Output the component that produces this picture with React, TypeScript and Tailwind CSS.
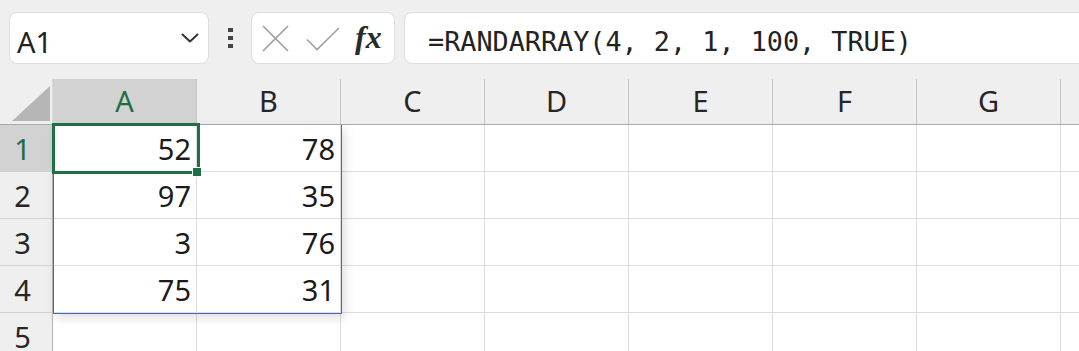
import React from 'react'

const COLS = ['A', 'B', 'C', 'D', 'E', 'F', 'G']
const DATA: Record<number, [number, number]> = {
  1: [52, 78],
  2: [97, 35],
  3: [3, 76],
  4: [75, 31],
}
const sans = { fontFamily: '"Noto Sans", "Noto Sans CJK JP", sans-serif' }

function Chevron() {
  return (
    <svg width="18" height="12" viewBox="0 0 18 12" fill="none">
      <polyline points="1.5,2.5 9,9.5 16.5,2.5" stroke="#333" strokeWidth="2" strokeLinecap="round" strokeLinejoin="round" />
    </svg>
  )
}

function Cross() {
  return (
    <svg width="27" height="27" viewBox="0 0 27 27" fill="none">
      <path d="M1 1 L26 26 M26 1 L1 26" stroke="#9e9e9e" strokeWidth="1.7" />
    </svg>
  )
}

function Check() {
  return (
    <svg width="34" height="24" viewBox="0 0 34 24" fill="none">
      <polyline points="1,12.5 11,22.5 33,1" stroke="#a3a3a3" strokeWidth="1.7" fill="none" />
    </svg>
  )
}

export default function App() {
  return (
    <div className="w-[1079px] h-[351px] overflow-hidden bg-white text-[#262626]" style={sans}>
      {/* Formula toolbar */}
      <div className="h-[79px] bg-[#efefef] flex items-start pt-[12px] pl-[9px]">
        <div className="w-[200px] h-[52px] bg-white border border-[#dedede] rounded-[8px] flex items-center pl-[7px] pr-[9px] pt-[6px]">
          <span className="text-[29px] leading-none flex-1 text-[#222]">A1</span>
          <span className="-mt-[6px]"><Chevron /></span>
        </div>
        <div className="w-[42px] h-[52px] flex flex-col items-center justify-center gap-[4px] pl-[1px]">
          <span className="block w-[5px] h-[4px] bg-[#444]" />
          <span className="block w-[5px] h-[4px] bg-[#444]" />
          <span className="block w-[5px] h-[4px] bg-[#444]" />
        </div>
        <div className="w-[144px] h-[52px] bg-white border border-[#dedede] rounded-[8px] flex items-center pl-[10px]">
          <Cross />
          <span className="ml-[17px] mt-[1px]"><Check /></span>
          <span className="ml-[15px] text-[32px] italic font-bold leading-none text-[#2a2a2a] -mt-[2px]" style={{ fontFamily: '"Liberation Serif", "DejaVu Serif", serif' }}>
            fx
          </span>
        </div>
        <div className="flex-1 ml-[9px] -mr-[12px] h-[52px] bg-white border border-[#dedede] rounded-[8px] flex items-center pl-[23px] pt-[9px]">
          <span className="text-[26.8px] leading-none text-[#222]" style={{ fontFamily: '"DejaVu Sans Mono", "Liberation Mono", monospace' }}>
            =RANDARRAY(4, 2, 1, 100, TRUE)
          </span>
        </div>
      </div>

      {/* Sheet */}
      <div className="relative">
        {/* Column headers */}
        <div className="flex h-[46px] bg-[#efefef] border-b border-[#ababab]">
          <div className="w-[53px] shrink-0 relative border-r border-[#d8d8d8]">
            <svg className="absolute left-[11px] top-[3px]" width="40" height="40" viewBox="0 0 40 40">
              <polygon points="1,39 39,4 39,39" fill="#b6b6b6" />
            </svg>
          </div>
          {COLS.map((c) => (
            <div
              key={c}
              className={
                'w-[144px] shrink-0 border-r border-[#c4c4c4] flex items-center justify-center text-[29px] leading-none pb-[3px] ' +
                (c === 'A' ? 'bg-[#d2d2d2] text-[#1f6e43]' : 'text-[#262626]')
              }
            >
              {c}
            </div>
          ))}
          <div className="flex-1" />
        </div>

        {/* Rows */}
        {[1, 2, 3, 4, 5].map((r) => (
          <div key={r} className="flex h-[47px]">
            <div
              className={
                'w-[53px] shrink-0 border-r border-b border-r-[#b4b4b4] border-b-[#d2d2d2] flex items-center justify-center pr-[7px] text-[29px] leading-none ' +
                (r === 1 ? 'bg-[#d2d2d2] text-[#1f6e43]' : 'bg-[#efefef] text-[#262626]')
              }
            >
              {r}
            </div>
            {COLS.map((c, i) => (
              <div
                key={c}
                className="w-[144px] shrink-0 border-r border-b border-[#dcdcdc] flex items-center justify-end pr-[5px] pt-[1px] text-[29px] leading-none text-[#1a1a1a]"
              >
                {DATA[r] && i < 2 ? DATA[r][i] : ''}
              </div>
            ))}
            <div className="flex-1 border-b border-[#dcdcdc]" />
          </div>
        ))}

        {/* Spill range outline */}
        <div className="absolute left-[53px] top-[46px] w-[289px] h-[189px] border border-t-0 border-[#3c6cc0] shadow-[3px_4px_10px_rgba(0,0,0,0.13)] pointer-events-none" />

        {/* Active cell */}
        <div className="absolute left-[52px] top-[44px] w-[148px] h-[51px] border-[3px] border-[#1e7145] pointer-events-none" />
        <div className="absolute left-[192px] top-[88px] w-[10px] h-[10px] bg-[#1e7145] border border-white pointer-events-none" />
      </div>
    </div>
  )
}
